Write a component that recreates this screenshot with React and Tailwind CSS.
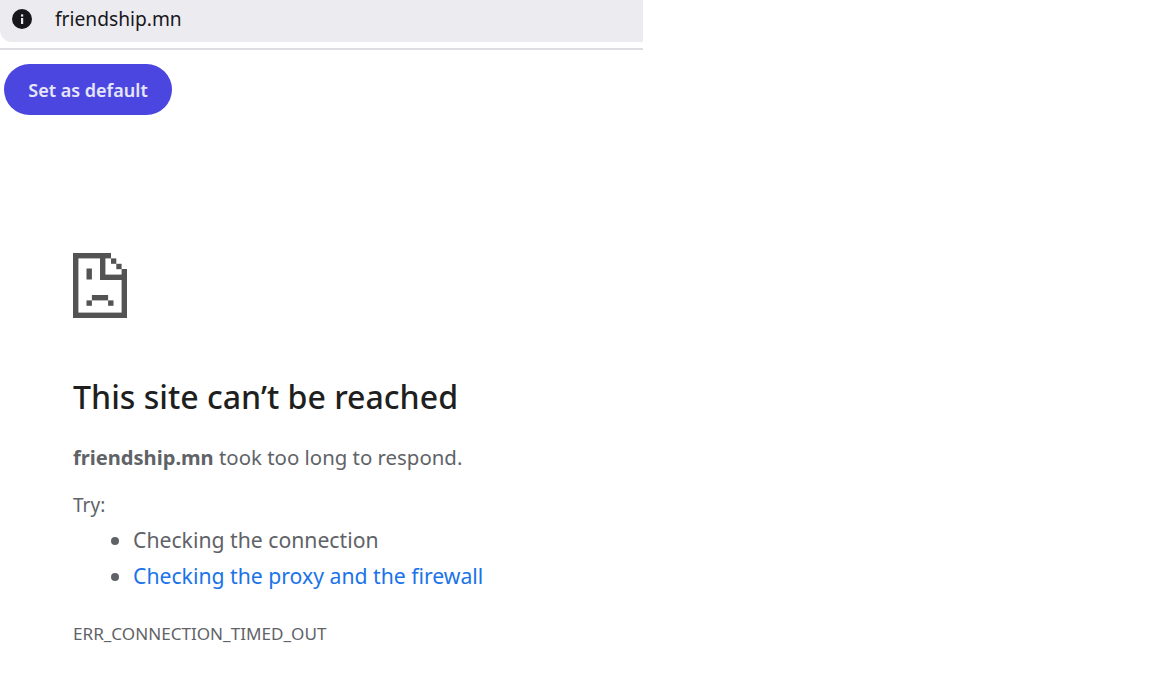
const FONT = "font-['Noto_Sans','Open_Sans',sans-serif]"

function InfoIcon() {
  return (
    <svg width="22" height="22" viewBox="0 0 22 22">
      <circle cx="11" cy="11" r="10" fill="#17171c" />
      <rect x="10" y="10" width="2.2" height="6" fill="#ecebf0" />
      <rect x="10" y="6.4" width="2.2" height="2.2" fill="#ecebf0" />
    </svg>
  )
}

function SadPage() {
  return (
    <svg width="54" height="65" viewBox="0 0 54 65" fill="#535353" className="block">
      <rect x="0" y="0" width="5.4" height="65" />
      <rect x="0" y="59.6" width="54" height="5.4" />
      <rect x="0" y="0" width="38" height="5.4" />
      <rect x="48.6" y="16" width="5.4" height="49" />
      <rect x="27" y="5" width="5.4" height="22" />
      <rect x="27" y="21.6" width="27" height="5.4" />
      <rect x="38" y="5.4" width="5.3" height="5.4" />
      <rect x="43.3" y="10.8" width="5.3" height="5.4" />
      <rect x="13.5" y="15.5" width="5.4" height="11" />
      <rect x="18.9" y="42" width="16.2" height="5.4" />
      <rect x="13.5" y="47.4" width="5.4" height="5.4" />
      <rect x="35.1" y="47.4" width="5.4" height="5.4" />
    </svg>
  )
}

export default function App() {
  return (
    <div className={`${FONT} w-[1152px] h-[679px] overflow-hidden bg-white`}>
      <div className="w-[643px] h-[42px] bg-[#ecebf0] rounded-bl-xl flex items-center pl-[11px] pb-[4px] text-[19.2px] text-[#17171c]">
        <InfoIcon />
        <span className="ml-[22px]">friendship.mn</span>
      </div>
      <div className="w-[643px] h-[2px] mt-[6px] bg-[#dfdee3]" />
      <button className="ml-1 mt-[14px] w-[168px] h-[51px] pt-[1px] rounded-full bg-[#4c46e0] text-[#e6e6fa] text-[18px] font-semibold">
        Set as default
      </button>
      <div className="ml-[73px] mt-[138px]">
        <SadPage />
        <h1 className="mt-[57px] text-[32.1px] leading-[44px] font-[550] text-[#1f1f1f]">This site can’t be reached</h1>
        <p className="mt-[23px] h-[30px] text-[20.4px] leading-[30px] text-[#5f6368]">
          <strong className="text-[20.1px] font-bold">friendship.mn</strong> took too long to respond.
        </p>
        <p className="mt-[18px] text-[19px] leading-[30px] text-[#5f6368]">Try:</p>
        <ul className="mt-[2px] ml-[60px] list-disc text-[21.2px] leading-[36px] text-[#5f6368]">
          <li>Checking the connection</li>
          <li className="text-[#1a73e8] marker:text-[#5f6368]">Checking the proxy and the firewall</li>
        </ul>
        <p className="mt-[28px] text-[17.1px] leading-[24px] text-[#5f6368]">ERR_CONNECTION_TIMED_OUT</p>
      </div>
    </div>
  )
}
